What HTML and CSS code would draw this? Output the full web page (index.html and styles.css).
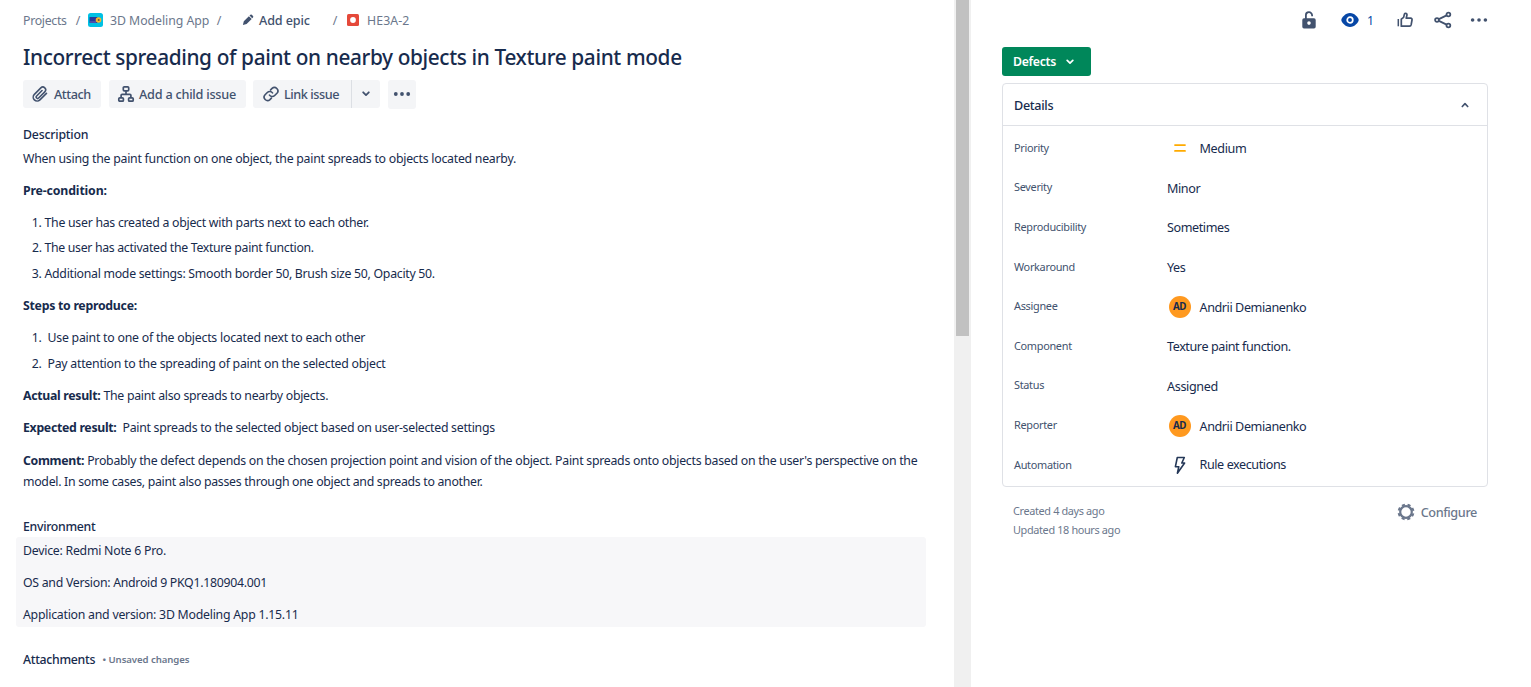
FILE: index.html
```html
<!DOCTYPE html>
<html lang="en">
<head>
<meta charset="utf-8">
<title>HE3A-2</title>
<link rel="stylesheet" href="styles.css">
</head>
<body>
<div class="page">
  <main class="issue">
    <nav class="crumbs">
      <span class="c-projects">Projects</span><span class="sep s1">/</span>
      <svg class="app-icon" width="15" height="14" viewBox="0 0 15 14"><rect width="15" height="14" rx="2.5" fill="#00c1e4"/><rect x="1.5" y="4" width="8" height="6" rx=".5" fill="#253b9a"/><rect x="2" y="8" width="6" height="2" fill="#4b4fa8"/><circle cx="10.5" cy="7" r="2.8" fill="#f5b52c"/><circle cx="10.7" cy="7" r="1" fill="#6b5637"/></svg>
      <span class="c-app">3D Modeling App</span><span class="sep s2">/</span>
      <svg class="pencil" width="12" height="12" viewBox="0 0 12 12"><path d="M.9 11 1.8 7.3 6.9 2.2 9.7 5 4.6 10.1Z M7.5 1.6 8.4.8a1 1 0 0 1 1.4 0l1.2 1.2a1 1 0 0 1 0 1.4l-.8.9Z" fill="#42526e"/></svg>
      <span class="c-epic">Add epic</span><span class="sep s3">/</span>
      <svg class="bug" width="12" height="12" viewBox="0 0 12 12"><rect width="12" height="12" rx="1.5" fill="#e5493a"/><circle cx="6" cy="6" r="2.9" fill="#fff"/></svg>
      <span class="c-key">HE3A-2</span>
    </nav>
    <h1>Incorrect spreading of paint on nearby objects in Texture paint mode</h1>
    <div class="actions">
      <button class="btn b-attach"><svg width="18" height="18" viewBox="0 0 24 24" fill="none" stroke="#42526e" stroke-width="2.1" stroke-linecap="round"><path d="m20.6 11.2-8.7 8.7a5.2 5.2 0 0 1-7.4-7.4l8.6-8.6a3.7 3.7 0 0 1 5.3 5.2l-8.2 8.3a1.9 1.9 0 0 1-2.7-2.7l7.2-7.3"/></svg><span>Attach</span></button>
      <button class="btn b-child"><svg width="18" height="18" viewBox="0 0 18 18" fill="none" stroke="#42526e" stroke-width="1.7"><rect x="6.3" y="1.8" width="5.4" height="4" rx="1"/><rect x="1.8" y="12.8" width="4.6" height="3.4" rx="1"/><rect x="11.6" y="12.8" width="4.6" height="3.4" rx="1"/><path d="M9 5.8V9.3M4.1 12.8V10.3Q4.1 9.3 5.1 9.3H12.9Q13.9 9.3 13.9 10.3V12.8"/></svg><span>Add a child issue</span></button>
      <div class="split">
        <button class="btn b-link"><svg width="18" height="18" viewBox="0 0 24 24" fill="none" stroke="#42526e" stroke-width="2.2" stroke-linecap="round"><path d="M10 13.5a4.6 4.6 0 0 0 6.9.5l3-3a4.6 4.6 0 0 0-6.5-6.5l-1.9 1.9M14 10.5a4.6 4.6 0 0 0-6.9-.5l-3 3a4.6 4.6 0 0 0 6.5 6.5l1.9-1.9"/></svg><span>Link issue</span></button>
        <button class="btn b-caret"><svg width="8" height="6" viewBox="0 0 8 6" fill="none" stroke="#42526e" stroke-width="1.8" stroke-linecap="round" stroke-linejoin="round"><path d="M1.2 1.3 4 4.1 6.8 1.3"/></svg></button>
      </div>
      <button class="btn b-more"><svg width="18" height="4" viewBox="0 0 18 4" fill="#42526e"><circle cx="2.8" cy="2" r="1.9"/><circle cx="9" cy="2" r="1.9"/><circle cx="15.2" cy="2" r="1.9"/></svg></button>
    </div>
    <h2>Description</h2>
    <p class="first t1">When using the paint function on one object, the paint spreads to objects located nearby.</p>
    <p><b class="t2">Pre-condition:</b></p>
    <ol>
      <li class="t3">The user has created a object with parts next to each other.</li>
      <li class="t4">The user has activated the Texture paint function.</li>
      <li class="t5">Additional mode settings: Smooth border 50, Brush size 50, Opacity 50.</li>
    </ol>
    <p><b class="t6">Steps to reproduce:</b></p>
    <ol>
      <li class="t7">&nbsp;Use paint to one of the objects located next to each other</li>
      <li class="t8">&nbsp;Pay attention to the spreading of paint on the selected object</li>
    </ol>
    <p><b class="t9">Actual result:</b> <span class="t10">The paint also spreads to nearby objects.</span></p>
    <p><b class="t11">Expected result:</b>&nbsp; <span class="t12">Paint spreads to the selected object based on user-selected settings</span></p>
    <p class="comment"><b class="t13">Comment:</b> <span class="t14">Probably the defect depends on the chosen projection point and vision of the object. Paint spreads onto objects based on the user's perspective on the</span><br><span class="t15">model. In some cases, paint also passes through one object and spreads to another.</span></p>
    <h2 class="env-title">Environment</h2>
    <section class="env">
      <p class="t16">Device: Redmi Note 6 Pro.</p>
      <p class="t17">OS and Version: Android 9 PKQ1.180904.001</p>
      <p class="t18">Application and version: 3D Modeling App 1.15.11</p>
    </section>
    <div class="attachments"><h2>Attachments</h2><span class="unsaved">• Unsaved changes</span></div>
  </main>
  <div class="scrollbar"><div class="thumb"></div></div>
  <aside class="side">
    <div class="tools">
      <svg class="lock" width="14" height="18" viewBox="0 0 14 18"><path d="M3.9 8V4.4a3.1 3.1 0 0 1 6.2-.2v1" fill="none" stroke="#42526e" stroke-width="1.8"/><path fill-rule="evenodd" d="M2 7.3h10a1.7 1.7 0 0 1 1.7 1.7v6.7a1.7 1.7 0 0 1-1.7 1.7H2A1.7 1.7 0 0 1 .3 15.7V9A1.7 1.7 0 0 1 2 7.3ZM7 10.3a1.8 1.8 0 1 0 0 3.6 1.8 1.8 0 0 0 0-3.6Z" fill="#42526e"/></svg>
      <svg class="eye" width="18" height="14" viewBox="0 0 18 14"><path d="M9 0C4.5 0 .3 4.7.3 7S4.5 14 9 14s8.7-4.7 8.7-7S13.5 0 9 0Z" fill="#0747a6"/><circle cx="9" cy="7" r="2.8" fill="none" stroke="#fff" stroke-width="1.7"/></svg>
      <span class="watch">1</span>
      <svg class="thumb-up" width="16" height="16" viewBox="0 0 16 16" fill="none" stroke="#42526e" stroke-width="1.7" stroke-linejoin="round"><path d="M1.3 7v7.3" stroke-width="1.5"/><path d="M4.3 14V7.2L6.6 5.4 7.4 2.1Q8 .9 9.3 1.5 10.2 2 9.9 3.3L9.2 6.2H13.6Q15.3 6.3 15 8L14.2 12.7Q13.9 14.2 12.5 14.2H4.3Z"/></svg>
      <svg class="share" width="18" height="18" viewBox="0 0 18 18" fill="none" stroke="#42526e" stroke-width="1.8"><circle cx="3" cy="9" r="1.9"/><circle cx="14.4" cy="3.5" r="1.9"/><circle cx="14.4" cy="14.5" r="1.9"/><path d="m4.9 8.1 7.7-3.7M4.9 9.9l7.7 3.7"/></svg>
      <svg class="more" width="18" height="4" viewBox="0 0 18 4" fill="#42526e"><circle cx="2.6" cy="2" r="1.8"/><circle cx="9" cy="2" r="1.8"/><circle cx="15.4" cy="2" r="1.8"/></svg>
    </div>
    <button class="status">Defects<svg width="8" height="6" viewBox="0 0 8 6" fill="none" stroke="#fff" stroke-width="1.7" stroke-linecap="round" stroke-linejoin="round"><path d="M1.2 1.4 4 4.1 6.8 1.4"/></svg></button>
    <section class="card">
      <header><span>Details</span><svg width="8" height="6" viewBox="0 0 8 6" fill="none" stroke="#42526e" stroke-width="1.7" stroke-linecap="round" stroke-linejoin="round"><path d="M1.3 4.5 4 1.7 6.7 4.5"/></svg></header>
      <dl>
        <dt>Priority</dt><dd><i class="ico"><svg width="12" height="8" viewBox="0 0 12 8" stroke="#ffab00" stroke-width="1.8" stroke-linecap="round"><path d="M1 1.1h10M1 6.9h10"/></svg></i><span class="v-wide">Medium</span></dd>
        <dt>Severity</dt><dd><span>Minor</span></dd>
        <dt>Reproducibility</dt><dd><span>Sometimes</span></dd>
        <dt>Workaround</dt><dd><span>Yes</span></dd>
        <dt>Assignee</dt><dd class="person"><i class="ico"><b class="avatar">AD</b></i><span>Andrii Demianenko</span></dd>
        <dt>Component</dt><dd><span>Texture paint function.</span></dd>
        <dt>Status</dt><dd><span class="v-wide">Assigned</span></dd>
        <dt>Reporter</dt><dd class="person"><i class="ico"><b class="avatar">AD</b></i><span>Andrii Demianenko</span></dd>
        <dt>Automation</dt><dd class="last"><i class="ico"><svg width="12" height="19" viewBox="0 0 12 19" fill="none" stroke="#253858" stroke-width="1.6" stroke-linejoin="round"><path d="M3.3 1.5H10.3L7.8 7H10.6L3.4 17.2 4.8 10.7H1.4Z"/></svg></i><span>Rule executions</span></dd>
      </dl>
    </section>
    <footer>
      <div class="dates"><div>Created 4 days ago</div><div>Updated 18 hours ago</div></div>
      <div class="configure"><svg width="18" height="18" viewBox="0 0 18 18" fill="none" stroke="#6b778c"><circle cx="9" cy="9" r="5.8" stroke-width="2.2"/><circle cx="9" cy="9" r="7.4" stroke-width="2" stroke-dasharray="3.1 2.712" stroke-dashoffset="-1.356"/></svg><span>Configure</span></div>
    </footer>
  </aside>
</div>
</body>
</html>
```
FILE: styles.css
```css
* { box-sizing: border-box; }
body {
  margin: 0;
  background: #fff;
  color: #172b4d;
  font: 12.3px/22px "Noto Sans", "Open Sans", sans-serif;
  letter-spacing: -0.2px;
  overflow: hidden;
}
h1, h2, p, ol, dl, dt, dd { margin: 0; }
svg { display: block; flex: none; }
button { border: 0; font: inherit; letter-spacing: inherit; color: inherit; }

.page { display: flex; width: 1531px; height: 687px; overflow: hidden; }
.issue { width: 954px; padding: 9px 28px 0 23px; white-space: nowrap; }

.crumbs { display: flex; align-items: center; height: 22px; color: #6b778c; }
.crumbs span { padding-top: 1px; }
.sep { width: 6px; text-align: center; }
.s1 { margin: 0 7px 0 8px; }
.c-projects { width: 44px; letter-spacing: -0.3px; }
.app-icon { margin-right: 7px; }
.c-app { width: 99px; letter-spacing: -0.05px; }
.s2 { margin: 0 20px 0 7px; }
.pencil { margin-right: 5px; }
.crumbs .c-epic { width: 51px; color: #42526e; font-weight: 500; font-size: 12.6px; padding-top: 2px; letter-spacing: -0.12px; }
.s3 { margin: 0 9px 0 22px; }
.bug { margin-right: 8px; }
.c-key { letter-spacing: 0.1px; }

h1 { margin-top: 12px; height: 29px; line-height: 29px; font-size: 20.8px; font-weight: 500; letter-spacing: -0.37px; }

.actions { display: flex; gap: 8px; height: 28px; margin-top: 8px; color: #42526e; }
.btn { display: flex; align-items: center; height: 28px; padding: 0; background: #f4f5f7; border-radius: 3px; font-weight: 500; font-size: 12.7px; }
.b-attach { width: 78px; padding-left: 8px; gap: 5px; letter-spacing: -0.45px; }
.b-child { width: 137px; padding-left: 8px; gap: 4px; letter-spacing: -0.24px; }
.split { display: flex; margin-left: -1px; }
.b-link { width: 98px; padding-left: 9px; gap: 4px; border-radius: 3px 0 0 3px; letter-spacing: -0.45px; }
.b-caret { width: 29px; justify-content: center; border-left: 1px solid #dcdfe4; border-radius: 0 3px 3px 0; }
.b-more { width: 28px; height: 29px; justify-content: center; padding-bottom: 1px; }

h2 { font-size: 12.3px; line-height: 22px; font-weight: 500; }
.actions + h2 { margin-top: 16px; }
p { margin-top: 10px; }
p.first { margin-top: 2px; }
ol { margin-top: 10px; padding-left: 21.5px; }
li { height: 22px; margin-bottom: 4px; }
li:first-child:nth-last-child(3) { margin-bottom: 3px; }
li:last-child { margin-bottom: 0; }
.t1 { letter-spacing: -0.25px; }
.t2 { letter-spacing: -0.14px; }
.t3 { letter-spacing: -0.265px; }
.t4 { letter-spacing: -0.315px; }
.t5 { letter-spacing: -0.28px; }
.t6 { letter-spacing: -0.27px; }
.t7 { letter-spacing: -0.225px; }
.t8 { letter-spacing: -0.24px; }
.t9, .t11 { letter-spacing: -0.3px; }
.t10 { letter-spacing: -0.27px; }
.t12 { letter-spacing: -0.275px; }
.t13 { letter-spacing: -0.32px; }
.t14 { letter-spacing: -0.26px; }
.t15 { letter-spacing: -0.29px; }
.t16 { letter-spacing: -0.24px; }
.t17 { letter-spacing: -0.275px; }
.t18 { letter-spacing: -0.24px; }
.comment { margin-top: 11px; line-height: 21px; }
.env-title { margin-top: 24px; letter-spacing: -0.3px; }
.env { width: 910px; height: 90px; margin: -1px 0 0 -7px; padding: 3px 7px; background: #f7f7f9; border-radius: 3px; }
.env p { margin: 0 0 10px; }
.attachments { display: flex; align-items: center; margin-top: 22px; height: 22px; }
.attachments h2 { letter-spacing: -0.3px; }
.unsaved { margin-left: 7.5px; font-size: 9.6px; font-weight: 600; color: #6b778c; letter-spacing: -0.07px; }

.scrollbar { width: 17px; background: #f0f0f0; padding-left: 2px; }
.thumb { width: 13px; height: 336px; background: #c1c1c1; }

.side { width: 560px; padding: 9px 43px 0 31px; }
.tools { display: flex; align-items: center; justify-content: flex-end; height: 22px; }
.eye { margin-left: 25px; }
.watch { width: 6px; margin-left: 8px; padding-top: 1px; color: #0747a6; }
.thumb-up { margin-left: 24px; }
.share { margin-left: 21px; }
.more { margin-left: 18px; }
.status { display: flex; align-items: center; gap: 10px; width: 89px; height: 29px; margin-top: 16px; padding: 0 0 0 11px; background: #00875a; color: #fff; font-weight: 600; border-radius: 3px; letter-spacing: -0.3px; }
.card { width: 486px; height: 404px; margin-top: 7px; border: 1px solid #dfe1e6; border-radius: 4px; }
.card header { display: flex; align-items: center; justify-content: space-between; height: 42px; padding: 1px 18px 0 11px; border-bottom: 1px solid #dfe1e6; font-weight: 500; font-size: 12.6px; letter-spacing: -0.3px; }
.card header span { padding-top: 2px; }
dl { display: grid; grid-template-columns: 153px 1fr; grid-auto-rows: 39.6px; align-items: center; padding: 2px 0 0 11px; }
dt { font-size: 10.9px; color: #42526e; letter-spacing: -0.3px; }
dd { display: flex; align-items: center; font-size: 12.6px; letter-spacing: -0.42px; padding-top: 1px; }
dd span { padding-top: 1.5px; }
dd.person { padding-top: 2px; }
dd.last span { padding-top: 0; }
.v-wide { letter-spacing: -0.35px; }
.ico { display: flex; justify-content: center; width: 25px; margin-right: 7.5px; font-style: normal; }
.avatar { width: 22px; height: 22px; border-radius: 50%; background: #ff991f; text-align: center; font-size: 9.8px; font-weight: 700; }
footer { display: flex; justify-content: space-between; padding: 14px 11px 0 11px; color: #6b778c; }
.dates { font-size: 10.9px; line-height: 19px; letter-spacing: -0.36px; }
.configure { display: flex; gap: 6px; align-items: center; height: 22px; font-size: 12.7px; font-weight: 500; letter-spacing: -0.4px; }
```
